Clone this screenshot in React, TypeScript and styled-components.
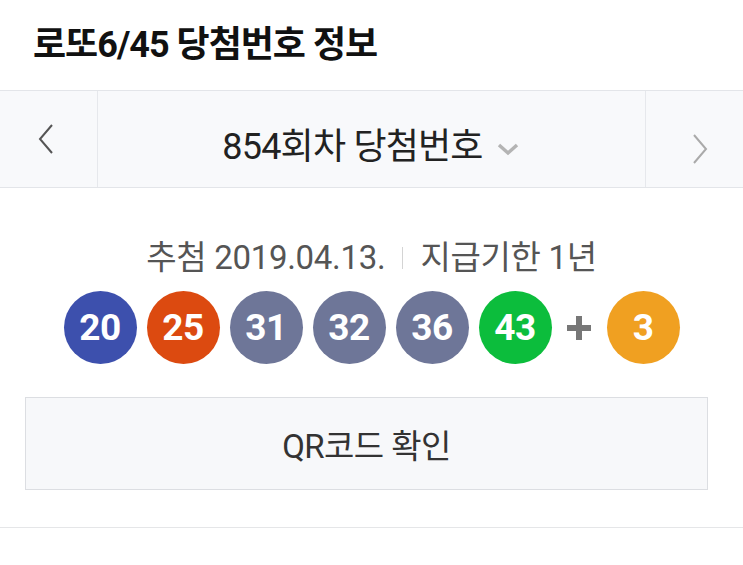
import React from 'react'
import styled, { createGlobalStyle } from 'styled-components'

const GlobalStyle = createGlobalStyle`
    html, body {
        margin: 0;
        padding: 0;
        background: #ffffff;
    }
    body {
        font-family: Roboto, "Noto Sans CJK KR", "Noto Sans", sans-serif;
        color: #222;
    }
`

const Page = styled.div`
    width: 743px;
    min-height: 565px;
    background: #fff;
`

const Title = styled.h1`
    margin: 0;
    height: 90px;
    padding-left: 33px;
    display: flex;
    align-items: center;
    padding-bottom: 8px;
    box-sizing: border-box;
    font-size: 36px;
    font-weight: 700;
    letter-spacing: -1px;
    color: #111;
`

const RoundNav = styled.div`
    display: grid;
    grid-template-columns: 98px 1fr 98px;
    height: 98px;
    background: #f8f9fb;
    border-top: 1px solid #e3e5e9;
    border-bottom: 1px solid #e3e5e9;
    box-sizing: border-box;
`

const ArrowCell = styled.button<{ $side: 'left' | 'right' }>`
    display: flex;
    align-items: center;
    justify-content: center;
    background: none;
    border: none;
    padding: 0;
    ${(p) => (p.$side === 'left' ? 'border-right: 1px solid #e6e8ec;' : 'border-left: 1px solid #e6e8ec;')}
    padding-top: ${(p) => (p.$side === 'right' ? '20px' : '0')};
    padding-left: ${(p) => (p.$side === 'left' ? '0' : '10px')};
    padding-right: ${(p) => (p.$side === 'left' ? '6px' : '0')};
`

const RoundTitle = styled.div`
    display: flex;
    align-items: center;
    justify-content: center;
    gap: 12px;
    padding-top: 8px;
    font-size: 36px;
    color: #222;
    letter-spacing: -0.8px;
`

const Info = styled.div`
    display: flex;
    flex-direction: column;
    align-items: center;
    padding-top: 51px;
`

const DrawDate = styled.div`
    display: flex;
    align-items: center;
    gap: 17px;
    font-size: 33px;
    line-height: 38px;
    color: #555;
    letter-spacing: -0.3px;
`

const Sep = styled.span`
    width: 1px;
    height: 22px;
    background: #d4d4d4;
`

const Balls = styled.div`
    display: flex;
    align-items: center;
    gap: 10px;
    margin-top: 14px;
`

const Ball = styled.span<{ $color: string }>`
    width: 73px;
    height: 73px;
    border-radius: 50%;
    background: ${(p) => p.$color};
    color: #fff;
    display: flex;
    align-items: center;
    justify-content: center;
    font-size: 37px;
    font-weight: 700;
    letter-spacing: -0.5px;
`

const Plus = styled.span`
    width: 35px;
    display: flex;
    justify-content: center;
`

const QrButton = styled.button`
    margin: 33px 0 0 25px;
    width: 683px;
    height: 93px;
    background: #f7f8fa;
    border: 1px solid #dcdee2;
    font-family: Roboto, "Noto Sans CJK KR", sans-serif;
    font-size: 33px;
    color: #333;
    letter-spacing: -0.6px;
    align-self: flex-start;
`

const Bottom = styled.div`
    margin-top: 37px;
    border-bottom: 1px solid #e5e6e8;
`

const ballColor = (n: number) => {
    if (n <= 10) return '#f0a021'
    if (n <= 20) return '#3d50ad'
    if (n <= 30) return '#dc4a10'
    if (n <= 40) return '#6e7698'
    return '#0cbd3c'
}

const numbers = [20, 25, 31, 32, 36, 43]
const bonus = 3

const App: React.FC = () => {
    return (
        <Page>
            <GlobalStyle />
            <Title>로또6/45 당첨번호 정보</Title>
            <RoundNav>
                <ArrowCell $side="left" aria-label="이전 회차">
                    <svg width="18" height="32" viewBox="0 0 18 32">
                        <path d="M15 2 L3 16 L15 30" fill="none" stroke="#555" strokeWidth="2" />
                    </svg>
                </ArrowCell>
                <RoundTitle>
                    854회차 당첨번호
                    <svg width="26" height="16" viewBox="0 0 26 16" style={{ marginTop: 12 }}>
                        <path d="M4 4 L13 12 L22 4" fill="none" stroke="#b4b4b4" strokeWidth="3.5" />
                    </svg>
                </RoundTitle>
                <ArrowCell $side="right" aria-label="다음 회차">
                    <svg width="18" height="32" viewBox="0 0 18 32">
                        <path d="M3 2 L15 16 L3 30" fill="none" stroke="#aaa" strokeWidth="2" />
                    </svg>
                </ArrowCell>
            </RoundNav>
            <Info>
                <DrawDate>
                    <span>추첨 2019.04.13.</span>
                    <Sep />
                    <span>지급기한 1년</span>
                </DrawDate>
                <Balls>
                    {numbers.map((n) => (
                        <Ball key={n} $color={ballColor(n)}>{n}</Ball>
                    ))}
                    <Plus>
                        <svg width="28" height="28" viewBox="0 0 28 28">
                            <path d="M14 2 V26 M2 14 H26" stroke="#777" strokeWidth="6" />
                        </svg>
                    </Plus>
                    <Ball $color={ballColor(bonus)}>{bonus}</Ball>
                </Balls>
                <QrButton>QR코드 확인</QrButton>
            </Info>
            <Bottom />
        </Page>
    )
}

export default App
